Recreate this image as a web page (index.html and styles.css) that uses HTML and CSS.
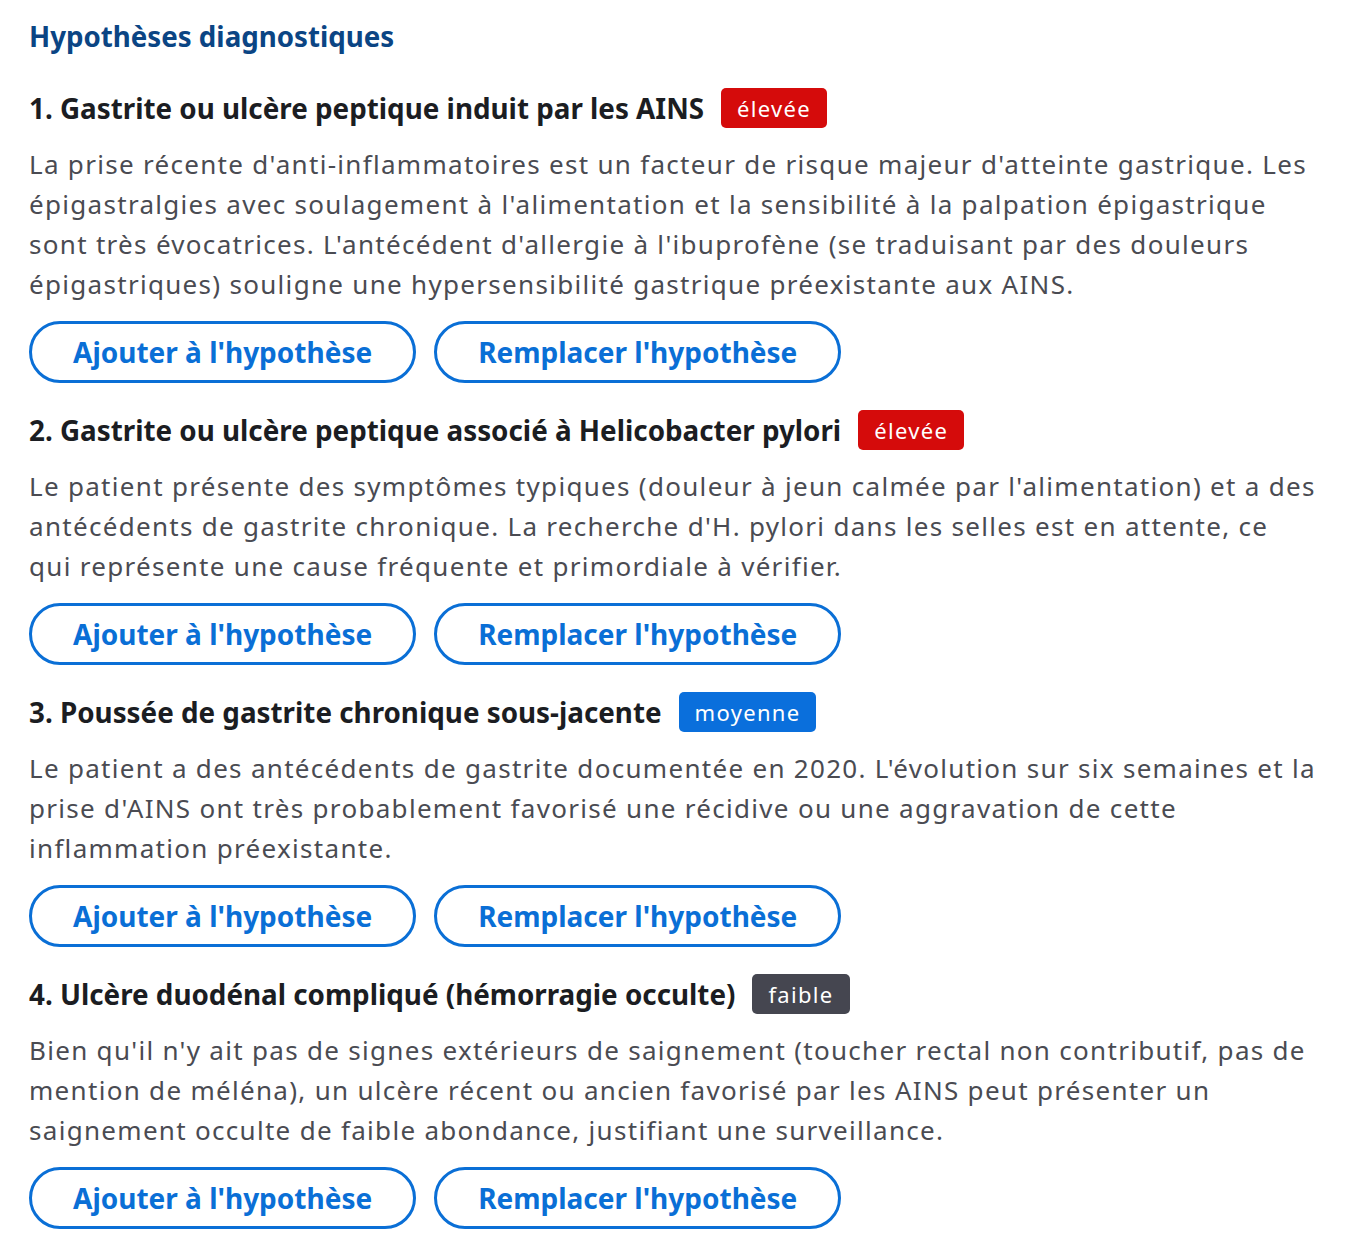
FILE: index.html
```html
<!DOCTYPE html>
<html lang="fr">
<head>
	<meta charset="UTF-8">
	<title>Hypothèses diagnostiques</title>
	<link rel="stylesheet" href="styles.css">
</head>
<body>

	<!-- Bloc des hypothèses -->
	<div id="hypotheses">
		<h2 class="titre">Hypothèses diagnostiques</h2>

		<div class="hypothese">
			<div class="entete">
				<span class="nom">1. Gastrite ou ulcère peptique induit par les AINS</span>
				<span class="niveau eleve">élevée</span>
			</div>
			<p class="explication">La prise récente d'anti-inflammatoires est un facteur de risque majeur d'atteinte gastrique. Les épigastralgies avec soulagement à l'alimentation et la sensibilité à la palpation épigastrique sont très évocatrices. L'antécédent d'allergie à l'ibuprofène (se traduisant par des douleurs épigastriques) souligne une hypersensibilité gastrique préexistante aux AINS.</p>
			<div class="actions">
				<button class="bouton ajouter">Ajouter à l'hypothèse</button>
				<button class="bouton remplacer">Remplacer l'hypothèse</button>
			</div>
		</div>

		<div class="hypothese">
			<div class="entete">
				<span class="nom">2. Gastrite ou ulcère peptique associé à Helicobacter pylori</span>
				<span class="niveau eleve">élevée</span>
			</div>
			<p class="explication">Le patient présente des symptômes typiques (douleur à jeun calmée par l'alimentation) et a des antécédents de gastrite chronique. La recherche d'H. pylori dans les selles est en attente, ce qui représente une cause fréquente et primordiale à vérifier.</p>
			<div class="actions">
				<button class="bouton ajouter">Ajouter à l'hypothèse</button>
				<button class="bouton remplacer">Remplacer l'hypothèse</button>
			</div>
		</div>

		<div class="hypothese">
			<div class="entete">
				<span class="nom">3. Poussée de gastrite chronique sous-jacente</span>
				<span class="niveau moyen">moyenne</span>
			</div>
			<p class="explication">Le patient a des antécédents de gastrite documentée en 2020. L'évolution sur six semaines et la prise d'AINS ont très probablement favorisé une récidive ou une aggravation de cette inflammation préexistante.</p>
			<div class="actions">
				<button class="bouton ajouter">Ajouter à l'hypothèse</button>
				<button class="bouton remplacer">Remplacer l'hypothèse</button>
			</div>
		</div>

		<div class="hypothese">
			<div class="entete">
				<span class="nom">4. Ulcère duodénal compliqué (hémorragie occulte)</span>
				<span class="niveau faible">faible</span>
			</div>
			<p class="explication">Bien qu'il n'y ait pas de signes extérieurs de saignement (toucher rectal non contributif, pas de mention de méléna), un ulcère récent ou ancien favorisé par les AINS peut présenter un saignement occulte de faible abondance, justifiant une surveillance.</p>
			<div class="actions">
				<button class="bouton ajouter">Ajouter à l'hypothèse</button>
				<button class="bouton remplacer">Remplacer l'hypothèse</button>
			</div>
		</div>
	</div>

</body>
</html>
```

FILE: styles.css
```css
	* {
		box-sizing: border-box;
	}

	body {
		font-family: "Noto Sans", "Open Sans", sans-serif;
		margin: 0;
		background-color: #ffffff;
	}

	div#hypotheses {
		padding: 16px 31px 14px 29px;
	}

	h2.titre {
		margin: 0 0 32px 0;
		font-size: 27.7px;
		line-height: 40px;
		font-weight: bold;
		color: #0b4584;
	}

	div.hypothese {
		margin-bottom: 27px;
	}

	div.entete {
		display: flex;
		align-items: center;
		gap: 17px;
		height: 40px;
	}

	span.nom {
		font-size: 27.8px;
		font-weight: bold;
		color: #1b1d22;
	}

	span.niveau {
		display: inline-block;
		height: 40px;
		line-height: 40px;
		padding: 0 16px;
		border-radius: 5px;
		font-size: 22px;
		letter-spacing: 0.06em;
		color: #ffffff;
	}

	span.eleve {
		background-color: #d50b0b;
	}

	span.moyen {
		background-color: #0a6fdc;
	}

	span.faible {
		background-color: #454650;
	}

	p.explication {
		margin: 16px 0 17px 0;
		font-size: 26px;
		line-height: 40px;
		letter-spacing: 0.05em;
		color: #4a4b52;
	}

	div.actions {
		display: flex;
		gap: 18px;
	}

	button.bouton {
		height: 62px;
		padding: 0 41px;
		border: 3px solid #0a6fd6;
		border-radius: 31px;
		background-color: #ffffff;
		color: #0a6fd6;
		font-family: "Noto Sans", "Open Sans", sans-serif;
		font-size: 28px;
		font-weight: bold;
		cursor: pointer;
	}
```
